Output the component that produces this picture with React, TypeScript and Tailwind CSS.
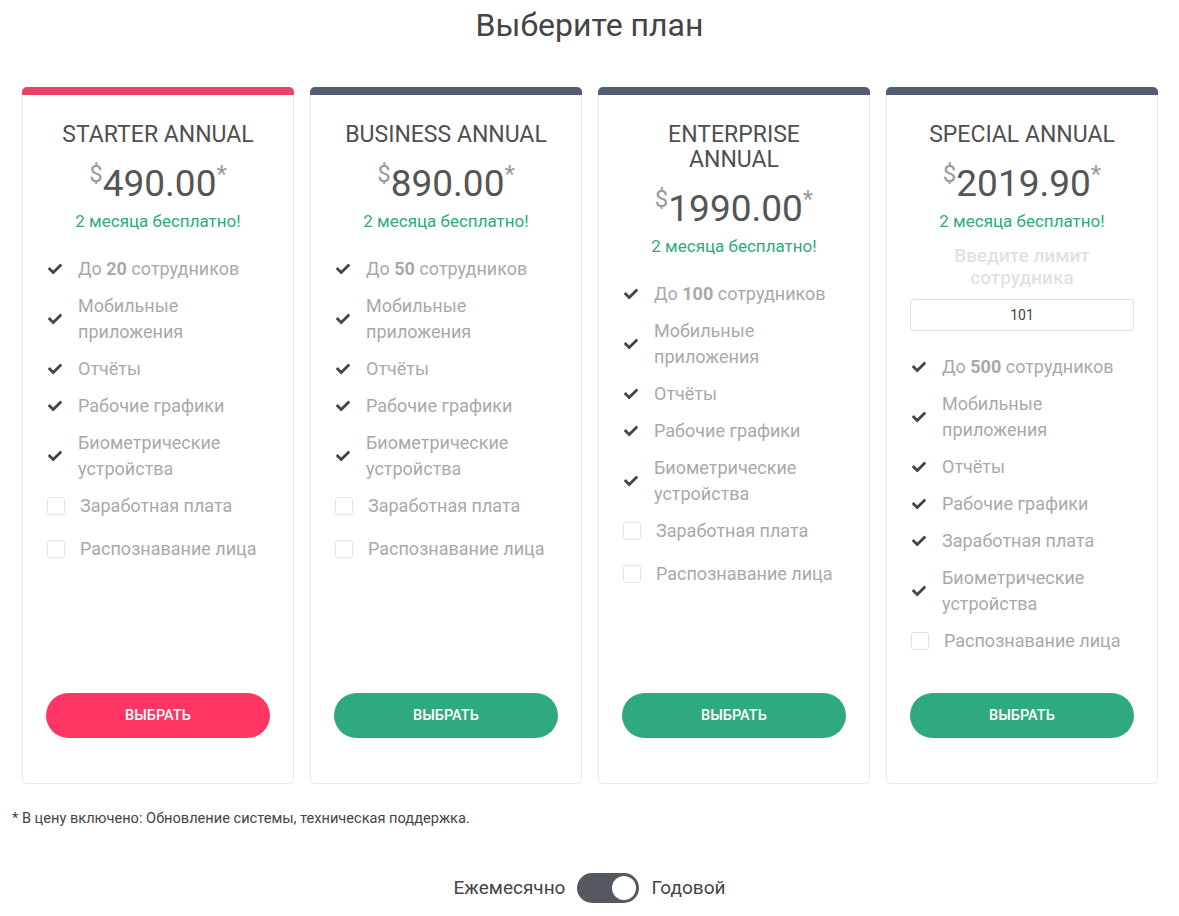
import { FaCheck } from "react-icons/fa";

type Feature = { text: React.ReactNode; on: boolean };

type Plan = {
  title: string[];
  price: string;
  bar: string;
  btn: string;
  limit?: boolean;
  features: Feature[];
};

const base = (n: string): Feature[] => [
  { text: <>До <b className="font-bold">{n}</b> сотрудников</>, on: true },
  { text: <>Мобильные<br />приложения</>, on: true },
  { text: "Отчёты", on: true },
  { text: "Рабочие графики", on: true },
  { text: <>Биометрические<br />устройства</>, on: true },
  { text: "Заработная плата", on: false },
  { text: "Распознавание лица", on: false },
];

const plans: Plan[] = [
  { title: ["STARTER ANNUAL"], price: "490.00", bar: "bg-[#e8446a]", btn: "bg-[#ff3563]", features: base("20") },
  { title: ["BUSINESS ANNUAL"], price: "890.00", bar: "bg-[#545e6c]", btn: "bg-[#2eaa7e]", features: base("50") },
  { title: ["ENTERPRISE", "ANNUAL"], price: "1990.00", bar: "bg-[#545e6c]", btn: "bg-[#2eaa7e]", features: base("100") },
  {
    title: ["SPECIAL ANNUAL"],
    price: "2019.90",
    bar: "bg-[#545e6c]",
    btn: "bg-[#2eaa7e]",
    limit: true,
    features: [
      { text: <>До <b className="font-bold">500</b> сотрудников</>, on: true },
      { text: <>Мобильные<br />приложения</>, on: true },
      { text: "Отчёты", on: true },
      { text: "Рабочие графики", on: true },
      { text: "Заработная плата", on: true },
      { text: <>Биометрические<br />устройства</>, on: true },
      { text: "Распознавание лица", on: false },
    ],
  },
];

const PlanCard = ({ plan }: { plan: Plan }) => {
  return (
    <div className="flex flex-col rounded-[5px] border border-t-0 border-[#e8e8e8] bg-white">
      <div className={`h-2 rounded-t-[5px] -mx-px ${plan.bar}`} />
      <div className="flex flex-1 flex-col px-[23px] pt-[27px] pb-[45px]">
        <h2 className="text-center text-[23px] leading-[25px] text-[#4f4f4f]">
          {plan.title.map((t) => (
            <div key={t}>{t}</div>
          ))}
        </h2>
        <div className="mt-[15px] flex items-start justify-center text-[#555]">
          <span className="text-[24px] leading-[24px] text-[#999]">$</span>
          <span className="text-[37px] leading-[44px]">{plan.price}</span>
          <span className="text-[24px] leading-[24px] text-[#999]">*</span>
        </div>
        <p className="mt-[5px] text-center text-[17px] leading-5 text-[#2eaa7e]">2 месяца бесплатно!</p>

        {plan.limit && (
          <div className="mt-[14px]">
            <p className="text-center text-[19px] font-medium leading-[22px] text-[#e2e2e2]">
              Введите лимит<br />сотрудника
            </p>
            <div className="mt-[10px] flex h-8 items-center justify-center rounded-[3px] border border-[#dedede] text-[14px] text-[#444]">
              101
            </div>
          </div>
        )}

        <ul className={`flex flex-col gap-[11px] ${plan.limit ? "mt-[23px]" : "mt-[25px]"}`}>
          {plan.features.map((f, i) => (
            <li key={i} className={`flex items-center text-[18px] leading-[26px] text-[#a9a9a9] ${f.on ? "" : "mb-[6px]"}`}>
              {f.on ? (
                <span className="flex w-8 shrink-0 pl-[2px]">
                  <FaCheck className="h-[14px] w-[14px] text-[#444]" />
                </span>
              ) : (
                <span className="flex w-[34px] shrink-0 pl-px">
                  <span className="h-[18px] w-[18px] rounded-[3px] border border-[#e2e2e2]" />
                </span>
              )}
              <span>{f.text}</span>
            </li>
          ))}
        </ul>

        <div className="mt-auto pt-[33px]">
          <button className={`h-[45px] w-full rounded-full text-[14.5px] font-medium text-white ${plan.btn}`}>
            ВЫБРАТЬ
          </button>
        </div>
      </div>
    </div>
  );
};

export default function App() {
  return (
    <div className="min-h-screen bg-white pb-6 font-['Roboto',sans-serif]">
      <h1 className="pt-[6px] text-center text-[32px] leading-[38px] text-[#444]">Выберите план</h1>

      <div className="mt-[43px] grid grid-cols-4 gap-4 px-[22px] pr-[21px]">
        {plans.map((p) => (
          <PlanCard key={p.price} plan={p} />
        ))}
      </div>

      <p className="mt-6 pl-3 text-[14.6px] leading-5 text-[#444]">
        * В цену включено: Обновление системы, техническая поддержка.
      </p>

      <div className="mt-[45px] flex items-center justify-center gap-3 text-[19px] text-[#444]">
        <span>Ежемесячно</span>
        <span className="flex h-[30px] w-[62px] items-center justify-end rounded-full bg-[#54595f] px-[3px]">
          <span className="h-6 w-6 rounded-full bg-white" />
        </span>
        <span>Годовой</span>
      </div>
    </div>
  );
}
